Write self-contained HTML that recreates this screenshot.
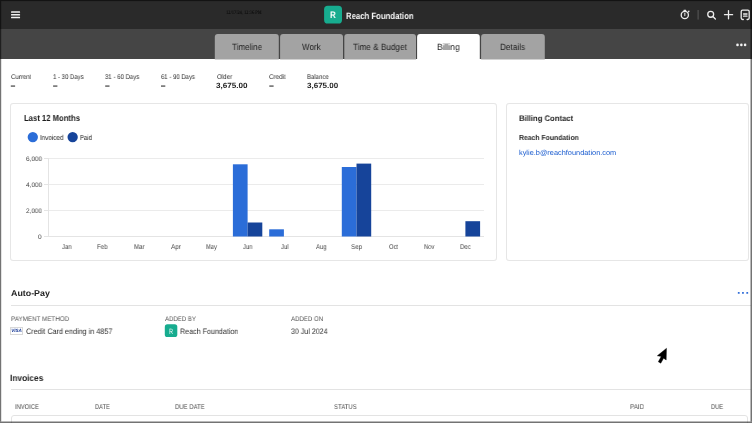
<!DOCTYPE html>
<html><head><meta charset="utf-8"><style>
html,body{margin:0;padding:0;width:752px;height:423px;overflow:hidden;background:#fff;}
body{position:relative;font-family:"Liberation Sans",sans-serif;}
#wrap{position:absolute;left:0;top:0;width:752px;height:423px;filter:blur(0.4px);}
.t{position:absolute;white-space:pre;line-height:1;transform-origin:0 0;text-rendering:geometricPrecision;will-change:transform;}
.b,.g,.blk{position:absolute}
#hdr{position:absolute;left:0;top:0;width:752px;height:29px;background:#2a2a2a}
#tabbar{position:absolute;left:0;top:29px;width:752px;height:30px;background:#454545}
.tab{position:absolute;top:34px;height:25px;background:#a3a3a3;border-radius:3px 3px 0 0}
.card{position:absolute;border:1px solid #e6e6e6;box-shadow:0 0 0.6px #eee;border-radius:3px;background:#fff;box-sizing:border-box}
</style></head><body><div id="wrap">
<div id="hdr"></div>
<div id="tabbar"></div>
<svg class="blk" style="left:0;top:0" width="752" height="60"><path d="M214.8 59.5V36.9Q214.8 33.9 217.8 33.9H275.8Q278.8 33.9 278.8 36.9V59.5Z" fill="#a3a3a3"/><path d="M280.1 59.5V36.9Q280.1 33.9 283.1 33.9H340.0Q343.0 33.9 343.0 36.9V59.5Z" fill="#a3a3a3"/><path d="M344.3 59.5V36.9Q344.3 33.9 347.3 33.9H413.0Q416.0 33.9 416.0 36.9V59.5Z" fill="#a3a3a3"/><path d="M417.1 59.5V36.9Q417.1 33.9 420.1 33.9H476.8Q479.8 33.9 479.8 36.9V59.5Z" fill="#ffffff"/><path d="M481.1 59.5V36.9Q481.1 33.9 484.1 33.9H541.8Q544.8 33.9 544.8 36.9V59.5Z" fill="#a3a3a3"/></svg>
<svg class="blk" style="left:0;top:0" width="30" height="29"><g fill="#f0f0f0"><rect x="11" y="11.3" width="9.1" height="1.55" rx="0.6"/><rect x="11" y="13.95" width="9.1" height="1.55" rx="0.6"/><rect x="11" y="16.8" width="9.1" height="1.55" rx="0.6"/></g></svg>
<svg class="blk" style="left:320px;top:2px" width="26" height="26" viewBox="320 2 26 26"><rect x="324.1" y="5.8" width="17.9" height="17.7" rx="3.6" fill="#17ac8f"/></svg>
<svg class="blk" style="left:670px;top:0" width="82" height="29" viewBox="670 0 82 29">
 <g fill="none" stroke="#ececec" stroke-width="1.3" stroke-linecap="round">
  <circle cx="684.8" cy="15.05" r="3.6"/>
  <path d="M684.0 10.3h1.7M688.4 11.8l0.5-0.5"/>
  <path d="M684.8 15.6v-2.4" stroke="#c8c8c8" stroke-width="1.2"/>
  <circle cx="710.7" cy="14.3" r="2.95"/>
  <path d="M712.9 16.5l2.5 2.5"/>
  <path d="M728.5 10.6v8.2M724.5 14.65h8.1"/>
  <path d="M743.3 19.5h-0.7a1.4 1.4 0 0 1-1.4-1.4v-6.6a1.4 1.4 0 0 1 1.4-1.4h5.2a1.4 1.4 0 0 1 1.4 1.4v6.6a1.4 1.4 0 0 1-1.4 1.4h-0.7"/>
  <path d="M743.6 14h3.4M743.6 16.2h3.4"/>
 </g>
 <rect x="697.6" y="10" width="1" height="9.6" fill="#5a5a5a"/>
</svg>
<svg class="blk" style="left:730px;top:38px" width="22" height="14" viewBox="730 38 22 14"><g fill="#f2f2f2"><circle cx="737.5" cy="44.9" r="1.3"/><circle cx="741.35" cy="44.9" r="1.3"/><circle cx="745.1" cy="44.9" r="1.3"/></g></svg>
<svg class="blk" style="left:0;top:80px" width="300" height="12" viewBox="0 80 300 12"><g fill="#707070"><rect x="10.8" y="85.3" width="4.3" height="1.6"/><rect x="53.1" y="85.3" width="4.3" height="1.6"/><rect x="105.2" y="85.3" width="4.3" height="1.6"/><rect x="161.0" y="85.3" width="4.3" height="1.6"/><rect x="269.3" y="85.3" width="4.3" height="1.6"/></g></svg>
<div class="card" style="left:10.2px;top:103px;width:486.9px;height:158px"></div>
<div class="card" style="left:506.1px;top:103px;width:243.4px;height:158.4px"></div>
<svg class="blk" style="left:20px;top:125px" width="66" height="24" viewBox="20 125 66 24"><circle cx="32.8" cy="137.05" r="5.15" fill="#2b6dd8"/><circle cx="72.65" cy="137.05" r="5.15" fill="#16449a"/></svg>
<div class="g" style="left:48.4px;top:158.0px;width:435.6px;height:1px;background:#ebebeb"></div><div class="g" style="left:48.4px;top:184.0px;width:435.6px;height:1px;background:#ebebeb"></div><div class="g" style="left:48.4px;top:210.0px;width:435.6px;height:1px;background:#ebebeb"></div><div class="g" style="left:48.4px;top:236.0px;width:435.6px;height:1px;background:#e4e4e4"></div><div class="g" style="left:47.9px;top:158.0px;width:1px;height:78.5px;background:#e4e4e4"></div><div class="g" style="left:44.2px;top:158.0px;width:4.2px;height:1px;background:#e4e4e4"></div><div class="g" style="left:44.2px;top:184.0px;width:4.2px;height:1px;background:#e4e4e4"></div><div class="g" style="left:44.2px;top:210.0px;width:4.2px;height:1px;background:#e4e4e4"></div><div class="g" style="left:44.2px;top:236.0px;width:4.2px;height:1px;background:#e4e4e4"></div>
<svg class="blk" style="left:0;top:0" width="752" height="423"><rect x="232.90" y="164.30" width="14.7" height="72.20" fill="#2b6dd8"/><rect x="247.60" y="222.50" width="14.7" height="14.00" fill="#16449a"/><rect x="269.20" y="229.30" width="14.7" height="7.20" fill="#2b6dd8"/><rect x="341.80" y="167.00" width="14.7" height="69.50" fill="#2b6dd8"/><rect x="356.50" y="163.60" width="14.7" height="72.90" fill="#16449a"/><rect x="465.40" y="221.20" width="14.7" height="15.30" fill="#16449a"/></svg>
<div class="blk" style="left:10.6px;top:305px;width:740.4px;height:1px;background:#e3e3e3"></div>
<svg class="blk" style="left:730px;top:285px" width="22" height="14" viewBox="730 285 22 14"><g fill="#2d6bd8"><rect x="737.8" y="291.9" width="1.9" height="1.9" rx="0.5"/><rect x="742" y="291.9" width="1.9" height="1.9" rx="0.5"/><rect x="746.3" y="291.9" width="1.9" height="1.9" rx="0.5"/></g></svg>
<div class="blk" style="left:10.2px;top:327.2px;width:13.2px;height:7.4px;box-sizing:border-box;border:0.7px solid #d8d8d8;background:#fff"></div>
<div class="t" style="left:10.4px;top:329.4px;width:13.2px;text-align:center;font-size:4.6px;font-weight:bold;font-style:italic;color:#1f3f99;transform:translateZ(0)">VISA</div>
<svg class="blk" style="left:160px;top:320px" width="22" height="22" viewBox="160 320 22 22"><rect x="164.8" y="324.3" width="12.5" height="12.8" rx="2.6" fill="#17ac8f"/></svg>
<div class="blk" style="left:10.8px;top:388.7px;width:740px;height:1px;background:#e3e3e3"></div>
<div class="blk" style="left:10.8px;top:415.2px;width:737.7px;height:20px;box-sizing:border-box;border:1px solid #e3e3e3;border-radius:3px"></div>
<div class="t" style="left:345.65px;top:12px;font-size:9.22px;transform:scaleX(0.8406);font-weight:bold;color:#f4f4f4;font-family:'Liberation Sans', sans-serif;">Reach Foundation</div>
<div class="t" style="left:225.73px;top:11px;font-size:5.45px;transform:scaleX(0.8184);font-weight:normal;color:#000;font-family:'Liberation Serif', serif;">12/17/24, 12:36 PM</div>
<div class="t" style="left:231.59px;top:43px;font-size:9.08px;transform:scaleX(0.8903);font-weight:normal;color:#222;font-family:'Liberation Sans', sans-serif;">Timeline</div>
<div class="t" style="left:301.72px;top:43px;font-size:9.08px;transform:scaleX(0.8847);font-weight:normal;color:#222;font-family:'Liberation Sans', sans-serif;">Work</div>
<div class="t" style="left:352.70px;top:43px;font-size:9.08px;transform:scaleX(0.9018);font-weight:normal;color:#222;font-family:'Liberation Sans', sans-serif;">Time &amp; Budget</div>
<div class="t" style="left:436.62px;top:43px;font-size:9.08px;transform:scaleX(0.9375);font-weight:normal;color:#222;font-family:'Liberation Sans', sans-serif;">Billing</div>
<div class="t" style="left:499.50px;top:43px;font-size:9.08px;transform:scaleX(0.9031);font-weight:normal;color:#222;font-family:'Liberation Sans', sans-serif;">Details</div>
<div class="t" style="left:10.51px;top:75px;font-size:6.84px;transform:scaleX(0.8909);font-weight:normal;color:#2e2e2e;font-family:'Liberation Sans', sans-serif;">Current</div>
<div class="t" style="left:52.52px;top:75px;font-size:6.84px;transform:scaleX(0.8792);font-weight:normal;color:#2e2e2e;font-family:'Liberation Sans', sans-serif;">1 - 30 Days</div>
<div class="t" style="left:104.55px;top:75px;font-size:6.84px;transform:scaleX(0.8864);font-weight:normal;color:#2e2e2e;font-family:'Liberation Sans', sans-serif;">31 - 60 Days</div>
<div class="t" style="left:160.51px;top:75px;font-size:6.84px;transform:scaleX(0.8765);font-weight:normal;color:#2e2e2e;font-family:'Liberation Sans', sans-serif;">61 - 90 Days</div>
<div class="t" style="left:216.62px;top:75px;font-size:6.84px;transform:scaleX(0.8992);font-weight:normal;color:#2e2e2e;font-family:'Liberation Sans', sans-serif;">Older</div>
<div class="t" style="left:268.51px;top:75px;font-size:6.84px;transform:scaleX(0.9110);font-weight:normal;color:#2e2e2e;font-family:'Liberation Sans', sans-serif;">Credit</div>
<div class="t" style="left:306.61px;top:75px;font-size:6.84px;transform:scaleX(0.8786);font-weight:normal;color:#2e2e2e;font-family:'Liberation Sans', sans-serif;">Balance</div>
<div class="t" style="left:215.71px;top:82px;font-size:7.54px;transform:scaleX(1.0758);font-weight:bold;color:#1e1e1e;font-family:'Liberation Sans', sans-serif;">3,675.00</div>
<div class="t" style="left:306.61px;top:82px;font-size:7.54px;transform:scaleX(1.0636);font-weight:bold;color:#1e1e1e;font-family:'Liberation Sans', sans-serif;">3,675.00</div>
<div class="t" style="left:23.57px;top:114px;font-size:8.80px;transform:scaleX(0.8736);font-weight:bold;color:#1e1e1e;font-family:'Liberation Sans', sans-serif;">Last 12 Months</div>
<div class="t" style="left:39.72px;top:134px;font-size:7.26px;transform:scaleX(0.8644);font-weight:normal;color:#222;font-family:'Liberation Sans', sans-serif;">Invoiced</div>
<div class="t" style="left:79.73px;top:134px;font-size:7.26px;transform:scaleX(0.8262);font-weight:normal;color:#222;font-family:'Liberation Sans', sans-serif;">Paid</div>
<div class="t" style="left:518.64px;top:115px;font-size:8.10px;transform:scaleX(0.9474);font-weight:bold;color:#1e1e1e;font-family:'Liberation Sans', sans-serif;">Billing Contact</div>
<div class="t" style="left:518.61px;top:134px;font-size:7.26px;transform:scaleX(0.9438);font-weight:bold;color:#262626;font-family:'Liberation Sans', sans-serif;">Reach Foundation</div>
<div class="t" style="left:518.64px;top:149px;font-size:7.26px;transform:scaleX(1.0165);font-weight:normal;color:#1a5ccf;font-family:'Liberation Sans', sans-serif;">kylie.b@reachfoundation.com</div>
<div class="t" style="left:10.74px;top:289px;font-size:8.52px;transform:scaleX(1.0405);font-weight:bold;color:#1e1e1e;font-family:'Liberation Sans', sans-serif;">Auto-Pay</div>
<div class="t" style="left:10.52px;top:317px;font-size:6.70px;transform:scaleX(0.9368);font-weight:normal;color:#555;font-family:'Liberation Sans', sans-serif;">PAYMENT METHOD</div>
<div class="t" style="left:25.63px;top:328px;font-size:7.96px;transform:scaleX(0.9084);font-weight:normal;color:#2e2e2e;font-family:'Liberation Sans', sans-serif;">Credit Card ending in 4857</div>
<div class="t" style="left:164.55px;top:317px;font-size:6.70px;transform:scaleX(0.9058);font-weight:normal;color:#555;font-family:'Liberation Sans', sans-serif;">ADDED BY</div>
<div class="t" style="left:179.68px;top:328px;font-size:7.96px;transform:scaleX(0.8966);font-weight:normal;color:#2e2e2e;font-family:'Liberation Sans', sans-serif;">Reach Foundation</div>
<div class="t" style="left:290.65px;top:317px;font-size:6.70px;transform:scaleX(0.9101);font-weight:normal;color:#555;font-family:'Liberation Sans', sans-serif;">ADDED ON</div>
<div class="t" style="left:290.65px;top:328px;font-size:7.96px;transform:scaleX(0.8887);font-weight:normal;color:#2e2e2e;font-family:'Liberation Sans', sans-serif;">30 Jul 2024</div>
<div class="t" style="left:9.89px;top:374px;font-size:8.94px;transform:scaleX(0.9328);font-weight:bold;color:#1e1e1e;font-family:'Liberation Sans', sans-serif;">Invoices</div>
<div class="t" style="left:14.51px;top:404px;font-size:6.98px;transform:scaleX(0.8342);font-weight:normal;color:#4a4a4a;font-family:'Liberation Sans', sans-serif;">INVOICE</div>
<div class="t" style="left:94.53px;top:404px;font-size:6.98px;transform:scaleX(0.8158);font-weight:normal;color:#4a4a4a;font-family:'Liberation Sans', sans-serif;">DATE</div>
<div class="t" style="left:174.73px;top:404px;font-size:6.98px;transform:scaleX(0.8570);font-weight:normal;color:#4a4a4a;font-family:'Liberation Sans', sans-serif;">DUE DATE</div>
<div class="t" style="left:333.51px;top:404px;font-size:6.98px;transform:scaleX(0.8596);font-weight:normal;color:#4a4a4a;font-family:'Liberation Sans', sans-serif;">STATUS</div>
<div class="t" style="left:629.58px;top:404px;font-size:6.98px;transform:scaleX(0.8983);font-weight:normal;color:#4a4a4a;font-family:'Liberation Sans', sans-serif;">PAID</div>
<div class="t" style="left:710.66px;top:404px;font-size:6.98px;transform:scaleX(0.8264);font-weight:normal;color:#4a4a4a;font-family:'Liberation Sans', sans-serif;">DUE</div>
<div class="t" style="left:329.55px;top:11px;font-size:9.50px;transform:scaleX(0.8481);font-weight:bold;color:#ffffff;font-family:'Liberation Sans', sans-serif;">R</div>
<div class="t" style="left:168.50px;top:328px;font-size:7.68px;transform:scaleX(0.7258);font-weight:normal;color:#ffffff;font-family:'Liberation Sans', sans-serif;">R</div>
<div class="t" style="left:61.73px;top:244px;font-size:6.98px;transform:scaleX(0.8591);font-weight:normal;color:#444;font-family:'Liberation Sans', sans-serif;">Jan</div>
<div class="t" style="left:96.63px;top:244px;font-size:6.98px;transform:scaleX(0.8715);font-weight:normal;color:#444;font-family:'Liberation Sans', sans-serif;">Feb</div>
<div class="t" style="left:133.54px;top:244px;font-size:6.98px;transform:scaleX(0.8755);font-weight:normal;color:#444;font-family:'Liberation Sans', sans-serif;">Mar</div>
<div class="t" style="left:170.68px;top:244px;font-size:6.98px;transform:scaleX(0.9118);font-weight:normal;color:#444;font-family:'Liberation Sans', sans-serif;">Apr</div>
<div class="t" style="left:205.71px;top:244px;font-size:6.98px;transform:scaleX(0.8275);font-weight:normal;color:#444;font-family:'Liberation Sans', sans-serif;">May</div>
<div class="t" style="left:242.55px;top:244px;font-size:6.98px;transform:scaleX(0.8472);font-weight:normal;color:#444;font-family:'Liberation Sans', sans-serif;">Jun</div>
<div class="t" style="left:280.68px;top:244px;font-size:6.98px;transform:scaleX(0.8536);font-weight:normal;color:#444;font-family:'Liberation Sans', sans-serif;">Jul</div>
<div class="t" style="left:315.66px;top:244px;font-size:6.98px;transform:scaleX(0.8537);font-weight:normal;color:#444;font-family:'Liberation Sans', sans-serif;">Aug</div>
<div class="t" style="left:350.69px;top:244px;font-size:6.98px;transform:scaleX(0.8959);font-weight:normal;color:#444;font-family:'Liberation Sans', sans-serif;">Sep</div>
<div class="t" style="left:388.52px;top:244px;font-size:6.98px;transform:scaleX(0.8388);font-weight:normal;color:#444;font-family:'Liberation Sans', sans-serif;">Oct</div>
<div class="t" style="left:423.56px;top:244px;font-size:6.98px;transform:scaleX(0.8346);font-weight:normal;color:#444;font-family:'Liberation Sans', sans-serif;">Nov</div>
<div class="t" style="left:459.73px;top:244px;font-size:6.98px;transform:scaleX(0.8600);font-weight:normal;color:#444;font-family:'Liberation Sans', sans-serif;">Dec</div>
<div class="t" style="left:25.66px;top:157px;font-size:6.56px;transform:scaleX(0.9748);font-weight:normal;color:#444;font-family:'Liberation Sans', sans-serif;">6,000</div>
<div class="t" style="left:25.70px;top:183px;font-size:6.56px;transform:scaleX(0.9791);font-weight:normal;color:#444;font-family:'Liberation Sans', sans-serif;">4,000</div>
<div class="t" style="left:25.71px;top:209px;font-size:6.56px;transform:scaleX(0.9675);font-weight:normal;color:#444;font-family:'Liberation Sans', sans-serif;">2,000</div>
<div class="t" style="left:37.50px;top:235px;font-size:6.56px;transform:scaleX(0.9434);font-weight:normal;color:#444;font-family:'Liberation Sans', sans-serif;">0</div>
<svg class="blk" style="left:650px;top:340px" width="25" height="25" viewBox="650 340 25 25">
 <polygon points="666.5,348.3 657.3,355.8 661.2,356.4 658.3,361.8 660.8,363.2 663.6,358.2 666.2,360.0" fill="#000" stroke="#000" stroke-width="0.4" stroke-linejoin="round"/>
</svg>
<svg class="blk" style="left:0;top:0" width="752" height="423"><g fill="#000" fill-opacity="0.55"><rect x="0" y="0" width="752" height="1.1"/><rect x="0" y="1.1" width="1.2" height="420.4"/><rect x="750.5" y="1.1" width="1.5" height="420.4"/><rect x="0" y="421.5" width="752" height="1.5"/></g></svg>
</div></body></html>
